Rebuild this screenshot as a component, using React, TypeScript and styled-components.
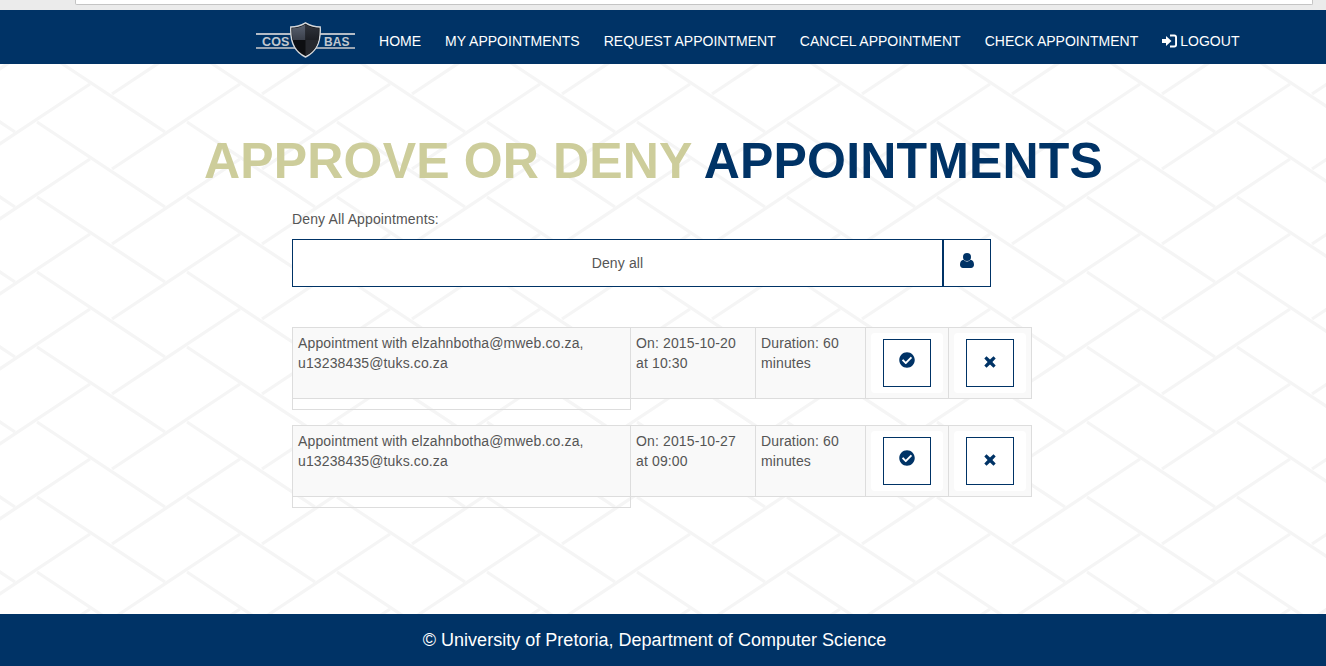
import React from "react";
import styled, { createGlobalStyle } from "styled-components";
import { FaCheckCircle } from "react-icons/fa";

const navy = "#003366";

const tile = `<svg xmlns='http://www.w3.org/2000/svg' width='150' height='75'><g stroke='#f5f5f5' stroke-width='3.2' fill='none'><path d='M37 47L165 132M-113 47L15 132M37 -28L165 57M-113 -28L15 57'/><path d='M240 84L112 169M90 84L-38 169M240 9L112 94M90 9L-38 94M240 -66L112 19M90 -66L-38 19'/></g></svg>`;

const GlobalStyle = createGlobalStyle`
  html, body {
    margin: 0;
    padding: 0;
    height: 100%;
  }
  body {
    font-family: "Liberation Sans", Arial, sans-serif;
    font-size: 14px;
    line-height: 20px;
    letter-spacing: 0.13px;
    color: #555;
    background-color: #fff;
    background-image: url("data:image/svg+xml,${encodeURIComponent(tile)}");
    background-position: 0 0;
  }
`;

const Page = styled.div`
  display: flex;
  flex-direction: column;
  height: 666px;
  overflow: hidden;
`;

const BrowserStrip = styled.div`
  flex: 0 0 10px;
  background: #ebebeb;
  padding-left: 75px;
  padding-right: 13px;
  box-sizing: border-box;
`;

const AddressBar = styled.div`
  height: 4px;
  background: #fff;
  border: 1px solid #c4c4c4;
  border-top: 0;
  border-radius: 0 0 2px 2px;
`;

const Header = styled.header`
  flex: 0 0 54px;
  box-sizing: border-box;
  background: ${navy};
  display: flex;
  align-items: center;
  padding: 8px 0 0 256px;
`;

const Logo = styled.svg`
  width: 100px;
  height: 36px;
  margin-right: 23px;
  margin-top: -2px;
`;

const NavList = styled.nav`
  display: flex;
  gap: 24px;
`;

const NavLink = styled.a`
  display: flex;
  align-items: center;
  color: #fff;
  font-size: 14px;
  letter-spacing: 0.02px;
  white-space: nowrap;
`;

const LogoutIcon = styled.svg`
  width: 15px;
  height: 14px;
  margin-right: 3px;
  fill: #fff;
`;

const Main = styled.main`
  flex: 1;
  display: flex;
  flex-direction: column;
  padding-left: 292px;
`;

const Title = styled.h1`
  margin: 67px 0 0 -292px;
  padding-right: 19px;
  text-align: center;
  font-size: 50px;
  line-height: 60px;
  letter-spacing: 0.15px;
  font-weight: 700;
  color: ${navy};
  white-space: nowrap;
`;

const TitleLight = styled.span`
  color: #cdcd9b;
`;

const DenyLabel = styled.label`
  display: block;
  margin-top: 18px;
  margin-bottom: 10px;
`;

const DenyRow = styled.div`
  display: flex;
  width: 699px;
  height: 48px;
`;

const DenyButton = styled.button`
  flex: 1;
  font: inherit;
  letter-spacing: inherit;
  color: #555;
  background: #fff;
  border: 1px solid ${navy};
`;

const IconButton = styled.button`
  flex: 0 0 48px;
  width: 48px;
  height: 48px;
  padding: 0 0 6px;
  display: flex;
  align-items: center;
  justify-content: center;
  background: #fff;
  border: 1px solid ${navy};
  color: ${navy};
  font-size: 16px;
`;

const GlyphIcon = styled.svg<{ $shift?: number }>`
  display: block;
  fill: currentColor;
  margin-top: ${(p) => p.$shift ?? 0}px;
`;

const Appointments = styled.div`
  display: flex;
  flex-direction: column;
  gap: 15px;
  margin-top: 40px;
`;

const Table = styled.table`
  border-collapse: collapse;
  table-layout: fixed;
  width: 740px;
`;

const Cell = styled.td<{ $width: number }>`
  width: ${(p) => p.$width}px;
  height: 71px;
  box-sizing: border-box;
  padding: 5px;
  vertical-align: top;
  background: #f9f9f9;
  border: 1px solid #ddd;
`;

const SpacerCell = styled.td`
  height: 10px;
  padding: 0;
  border: 1px solid #ddd;
`;

const Well = styled.div`
  display: flex;
  justify-content: center;
  padding: 6px 0;
  background: #fff;
  border-radius: 4px;
`;

const Footer = styled.footer`
  flex: 0 0 52px;
  box-sizing: border-box;
  padding-right: 17px;
  display: flex;
  align-items: center;
  justify-content: center;
  background: ${navy};
  color: #fff;
  font-size: 18px;
  letter-spacing: 0.02px;
`;

const appointments = [
  { date: "2015-10-20", time: "10:30" },
  { date: "2015-10-27", time: "09:00" },
];

function UserIcon() {
  return (
    <GlyphIcon width="14" height="15" viewBox="0 0 14 15">
      <circle cx="7" cy="4" r="4" />
      <path d="M3.600 6.800C4.500 8 5.700 8.600 7 8.600C8.300 8.600 9.500 8 10.400 6.800C12.800 7 14 9 14 11.800C14 13.800 12.800 15 11 15H3C1.200 15 0 13.800 0 11.800C0 9 1.200 7 3.600 6.800Z" />
    </GlyphIcon>
  );
}

function CrossIcon() {
  return (
    <GlyphIcon width="12" height="12" viewBox="0 0 12 12" $shift={3}>
      <path d="M2.500 0.300L6 3.600L9.500 0.300L11.700 2.500L8.400 6L11.700 9.500L9.500 11.700L6 8.400L2.500 11.700L0.300 9.500L3.600 6L0.300 2.500Z" />
    </GlyphIcon>
  );
}

export default function App() {
  return (
    <Page>
      <GlobalStyle />
      <BrowserStrip>
        <AddressBar />
      </BrowserStrip>
      <Header>
        <Logo viewBox="0 0 100 36">
          <defs>
            <linearGradient id="shieldLight" x1="0" y1="0" x2="0" y2="1">
              <stop offset="0" stopColor="#5a6270" />
              <stop offset="1" stopColor="#3a3f4a" />
            </linearGradient>
            <linearGradient id="shieldDark" x1="0" y1="0" x2="0" y2="1">
              <stop offset="0" stopColor="#30343c" />
              <stop offset="1" stopColor="#1d1f24" />
            </linearGradient>
          </defs>
          <rect x="0" y="11" width="99" height="2" fill="#b4bcc6" />
          <rect x="0" y="25" width="99" height="2" fill="#9aa5b2" />
          <text x="6" y="24" fontFamily="Liberation Sans" fontWeight="700" fontSize="12.5" fill="#c0c7cf">COS</text>
          <text x="68" y="24" fontFamily="Liberation Sans" fontWeight="700" fontSize="12" fill="#c0c7cf">BAS</text>
          <path d="M49.500 0.800C45 3.500 40 5 34.800 5C34 19 37.500 29.500 49.500 35C61.500 29.500 65 19 64.200 5C59 5 54 3.500 49.500 0.800Z" fill="#0d0e11" stroke="#d4d8dc" strokeWidth="1.400" />
          <path d="M49.500 2.500V18H36.500C36 14 35.900 10 36.100 6.300C41 6.100 45.500 5 49.500 2.500Z" fill="url(#shieldLight)" />
          <path d="M49.500 2.500C53.500 5 58 6.100 62.900 6.300C63.100 10 63 14 62.500 18H49.500Z" fill="url(#shieldDark)" />
          <path d="M49.500 18H62.500C61 25 57 30 49.500 33.800Z" fill="#26282e" />
        </Logo>
        <NavList>
          <NavLink>HOME</NavLink>
          <NavLink>MY APPOINTMENTS</NavLink>
          <NavLink>REQUEST APPOINTMENT</NavLink>
          <NavLink>CANCEL APPOINTMENT</NavLink>
          <NavLink>CHECK APPOINTMENT</NavLink>
          <NavLink>
            <LogoutIcon viewBox="0 0 15 14">
              <path d="M0 5H4V2L9.500 7L4 12V9H0Z" />
              <path d="M8 0.500H12.500C13.900 0.500 15 1.600 15 3V11C15 12.400 13.900 13.500 12.500 13.500H8V11.600H12C12.700 11.600 13.100 11.200 13.100 10.500V3.500C13.100 2.800 12.700 2.400 12 2.400H8Z" />
            </LogoutIcon>
            LOGOUT
          </NavLink>
        </NavList>
      </Header>
      <Main>
        <Title>
          <TitleLight>APPROVE OR DENY</TitleLight> APPOINTMENTS
        </Title>
        <DenyLabel>Deny All Appointments:</DenyLabel>
        <DenyRow>
          <DenyButton>Deny all</DenyButton>
          <IconButton>
            <UserIcon />
          </IconButton>
        </DenyRow>
        <Appointments>
          {appointments.map((a) => (
            <Table key={a.date}>
              <tbody>
                <tr>
                  <Cell $width={338}>
                    Appointment with elzahnbotha@mweb.co.za, u13238435@tuks.co.za
                  </Cell>
                  <Cell $width={125}>
                    On: {a.date} at {a.time}
                  </Cell>
                  <Cell $width={110}>Duration: 60 minutes</Cell>
                  <Cell $width={83}>
                    <Well>
                      <IconButton>
                        <FaCheckCircle />
                      </IconButton>
                    </Well>
                  </Cell>
                  <Cell $width={83}>
                    <Well>
                      <IconButton>
                        <CrossIcon />
                      </IconButton>
                    </Well>
                  </Cell>
                </tr>
                <tr>
                  <SpacerCell />
                </tr>
              </tbody>
            </Table>
          ))}
        </Appointments>
      </Main>
      <Footer>© University of Pretoria, Department of Computer Science</Footer>
    </Page>
  );
}
